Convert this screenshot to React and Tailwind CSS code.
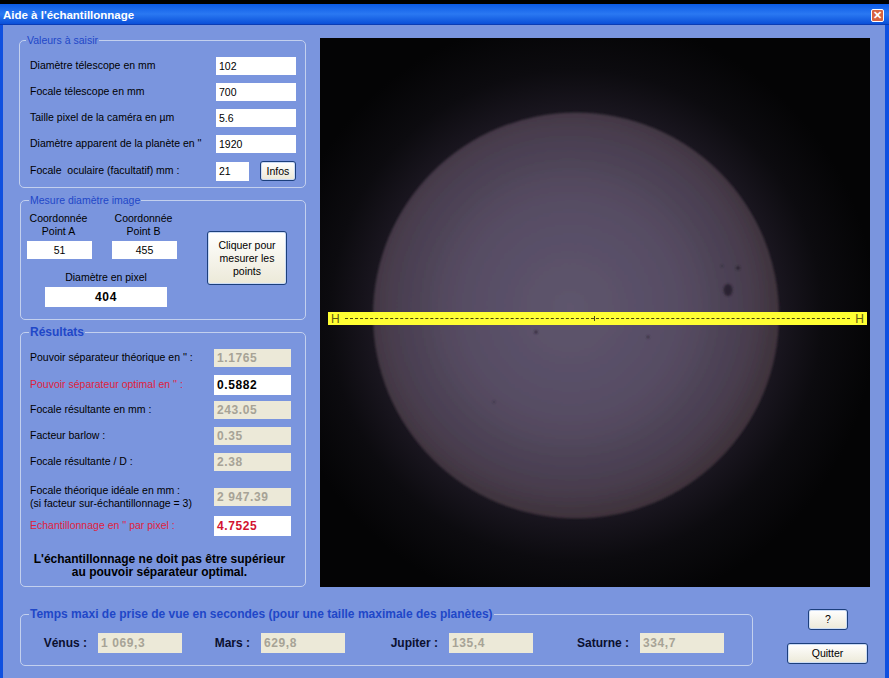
const font = { fontFamily: '"Liberation Sans", Arial, sans-serif' };
const thin = 'text-[10.5px]';

function Group({ title, bold, className, legend = 'ml-[8px]', children }) {
  return (
    <fieldset className={`border border-[#c3d0ee] rounded-[5px] ${className}`}>
      <legend className={`${legend} px-[1px] leading-[14px] text-[#1f47c8] ${bold ? 'font-bold text-[12px]' : thin}`}>{title}</legend>
      {children}
    </fieldset>
  );
}

function Box({ value, className = '', disabled, bold, color = 'text-black' }) {
  const look = disabled
    ? 'bg-[#ece9d8] text-[#a7a396] font-bold tracking-[0.6px] text-[12px]'
    : bold
      ? `bg-white ${color} font-bold tracking-[0.6px] text-[12px]`
      : `bg-white ${color} ${thin}`;
  return <div className={`flex items-center leading-none ${look} ${className}`}>{value}</div>;
}

function XpButton({ children, className = '' }) {
  return (
    <button className={`rounded-[3px] border border-[#1c3f7c] bg-gradient-to-b from-white to-[#ece9d8] ${thin} leading-[13px] text-black shadow-[inset_0_0_0_1px_#ccdcf5] ${className}`}>
      {children}
    </button>
  );
}

const inputRows = [
  ['Diamètre télescope en mm', '102'],
  ['Focale télescope en mm', '700'],
  ['Taille pixel de la caméra en µm', '5.6'],
  ['Diamètre apparent de la planète en \'\'', '1920'],
];

const planets = [
  ['Vénus :', '1 069,3', 'w-[72px]', 'ml-0'],
  ['Mars :', '629,8', 'w-[74px]', 'ml-[5px]'],
  ['Jupiter :', '135,4', 'w-[88px]', 'ml-[16px]'],
  ['Saturne :', '334,7', 'w-[93px]', 'ml-[14px]'],
];

function SolarImage() {
  return (
    <svg viewBox="0 0 550 549" className="block w-full h-full">
      <defs>
        <radialGradient id="halo" cx="256" cy="277" r="300" gradientUnits="userSpaceOnUse">
          <stop offset="0.66" stopColor="#1b1721" />
          <stop offset="0.82" stopColor="#0c0b0f" />
          <stop offset="1" stopColor="#040405" />
        </radialGradient>
        <radialGradient id="disc" cx="250" cy="270" r="212" gradientUnits="userSpaceOnUse">
          <stop offset="0" stopColor="#5e556d" />
          <stop offset="0.5" stopColor="#574d64" />
          <stop offset="0.85" stopColor="#483d4e" />
          <stop offset="1" stopColor="#3e323a" />
        </radialGradient>
        <filter id="soft"><feGaussianBlur stdDeviation="1.2" /></filter>
        <filter id="spot"><feGaussianBlur stdDeviation="0.8" /></filter>
      </defs>
      <rect width="550" height="549" fill="#040405" />
      <rect width="550" height="549" fill="url(#halo)" />
      <circle cx="256" cy="277.5" r="203" fill="url(#disc)" filter="url(#soft)" />
      <g fill="#2a2430" filter="url(#spot)">
        <ellipse cx="408" cy="252" rx="4.5" ry="6" />
        <circle cx="418" cy="230" r="2" />
        <circle cx="402" cy="228" r="1" />
        <circle cx="216" cy="294" r="1.6" />
        <circle cx="328" cy="299" r="1.3" />
        <circle cx="174" cy="364" r="0.9" />
      </g>
    </svg>
  );
}

export default function App() {
  return (
    <div className="w-[889px] h-[678px] overflow-hidden bg-black pt-[4px]" style={font}>
      {/* barre de titre */}
      <div className="h-[21px] flex items-center justify-between pl-[3px] pr-[5px] bg-gradient-to-b from-[#0a5ae6] via-[#2a78f2] to-[#0b4fd8] border-b border-[#0a3cb4]">
        <span className="mt-[3px] text-white font-bold text-[11.5px]">Aide à l'échantillonnage</span>
        <span className="mt-[2px] w-[13px] h-[13px] flex items-center justify-center rounded-[2px] border border-white bg-[#d8623f] text-white text-[11px] font-bold leading-none">✕</span>
      </div>

      <div className="h-[653px] bg-[#7a95de] border-l-[3px] border-l-[#0f50e0] border-r-[4px] border-r-[#0f50e0]">
        <div className="flex pt-[13px]">
          {/* colonne gauche */}
          <div className="w-[303px] pl-[16px] -mt-[5px] shrink-0">
            <Group title="Valeurs à saisir" legend="ml-[6px]" className="w-[287px] h-[155px]">
              <div className={`flex flex-col gap-[8px] pl-[10px] pt-[10px] ${thin} text-black`}>
                {inputRows.map(([label, value]) => (
                  <div key={label} className="flex items-center h-[18px]">
                    <span className="w-[186px]">{label}</span>
                    <Box value={value} className="w-[80px] h-[18px] pl-[3px]" />
                  </div>
                ))}
                <div className="flex items-center h-[20px]">
                  <span className="w-[186px] whitespace-pre">Focale  oculaire (facultatif) mm :</span>
                  <Box value="21" className="w-[33px] h-[19px] pl-[3px]" />
                  <XpButton className="ml-[11px] w-[36px] h-[20px]">Infos</XpButton>
                </div>
              </div>
            </Group>

            <Group title="Mesure diamètre image" className="mt-[5px] ml-[1px] w-[286px] h-[127px]">
              <div className={`${thin} text-black`}>
                <div className="flex pl-[6px] pt-[5px]">
                  <div className="w-[66px] text-center leading-[13px]">
                    <div className="pr-[3px]">Coordonnée<br />Point A</div>
                    <Box value="51" className="mt-[3px] w-[65px] h-[18px] justify-center" />
                  </div>
                  <div className="ml-[19px] w-[66px] text-center leading-[13px]">
                    <div className="pr-[3px]">Coordonnée<br />Point B</div>
                    <Box value="455" className="mt-[3px] w-[65px] h-[18px] justify-center" />
                  </div>
                  <XpButton className="ml-[29px] mt-[19px] w-[80px] h-[54px] px-[3px]">Cliquer pour mesurer les points</XpButton>
                </div>
                <div className="ml-[24px] w-[122px] -mt-[15px] text-center">
                  <div className="leading-[14px]">Diamètre en pixel</div>
                  <Box value="404" bold className="mt-[3px] w-[122px] h-[20px] justify-center" />
                </div>
              </div>
            </Group>

            <Group title="Résultats" bold className="mt-[5px] ml-[1px] w-[286px] h-[262px]">
              <div className={`flex flex-col pl-[9px] pt-[10px] pr-[14px] ${thin} text-black`}>
                <div className="flex items-center h-[18px] justify-between"><span>Pouvoir séparateur théorique en '' :</span><Box disabled value="1.1765" className="w-[77px] h-[18px] pl-[3px]" /></div>
                <div className="flex items-center h-[20px] mt-[8px] justify-between text-[#e0213c]"><span>Pouvoir séparateur optimal en '' :</span><Box bold value="0.5882" className="w-[77px] h-[20px] pl-[3px]" /></div>
                <div className="flex items-center h-[18px] mt-[6px] justify-between"><span>Focale résultante en mm :</span><Box disabled value="243.05" className="w-[77px] h-[18px] pl-[3px]" /></div>
                <div className="flex items-center h-[18px] mt-[8px] justify-between"><span>Facteur barlow :</span><Box disabled value="0.35" className="w-[77px] h-[18px] pl-[3px]" /></div>
                <div className="flex items-center h-[18px] mt-[8px] justify-between"><span>Focale résultante / D :</span><Box disabled value="2.38" className="w-[77px] h-[18px] pl-[3px]" /></div>
                <div className="flex items-center h-[26px] mt-[13px] justify-between leading-[13px]"><span>Focale théorique idéale en mm :<br />(si facteur sur-échantillonnage = 3)</span><Box disabled value="2 947.39" className="w-[77px] h-[18px] pl-[3px]" /></div>
                <div className="flex items-center h-[20px] mt-[6px] justify-between text-[#e0213c]"><span>Echantillonnage en '' par pixel :</span><Box bold color="text-[#d3132f]" value="4.7525" className="w-[77px] h-[20px] pl-[3px]" /></div>
                <p className="mt-[17px] -ml-[7px] -mr-[5px] text-center font-bold leading-[13px] text-[12px] text-black">L'échantillonnage ne doit pas être supérieur<br />au pouvoir séparateur optimal.</p>
              </div>
            </Group>
          </div>

          {/* image */}
          <div className="relative ml-[14px] w-[550px] h-[549px] shrink-0">
            <SolarImage />
            <div className="absolute left-[8px] top-[274px] w-[539px] h-[13px] flex items-center gap-[5px] px-[3px] bg-[#ffff33] text-[12px] text-[#5d5a12] leading-none">
              <span>H</span>
              <span className="relative flex-1 border-t border-dashed border-[#4a4710]">
                <span className="absolute left-1/2 -ml-[4px] -top-[3px] h-[5px] w-px bg-[#4a4710]" />
              </span>
              <span>H</span>
            </div>
          </div>
        </div>

        <div className="flex pl-[17px] mt-[20px]">
          <Group title="Temps maxi de prise de vue en secondes (pour une taille maximale des planètes)" bold className="w-[733px] h-[59px]">
            <div className="flex items-center h-[20px] mt-[12px] pl-[5px]">
              {planets.map(([name, value, w, ml]) => (
                <div key={name} className={`flex items-center ${ml}`}>
                  <span className={`${w} text-right pr-[11px] text-[12px] font-bold text-[#0b1030] whitespace-nowrap`}>{name}</span>
                  <Box disabled value={value} className="w-[84px] h-[20px] pl-[3px]" />
                </div>
              ))}
            </div>
          </Group>
          <div className="w-[115px] flex flex-col items-end">
            <XpButton className="mr-[20px] mt-[2px] w-[40px] h-[21px]">?</XpButton>
            <XpButton className="mt-[13px] w-[81px] h-[21px]">Quitter</XpButton>
          </div>
        </div>
      </div>
    </div>
  );
}
